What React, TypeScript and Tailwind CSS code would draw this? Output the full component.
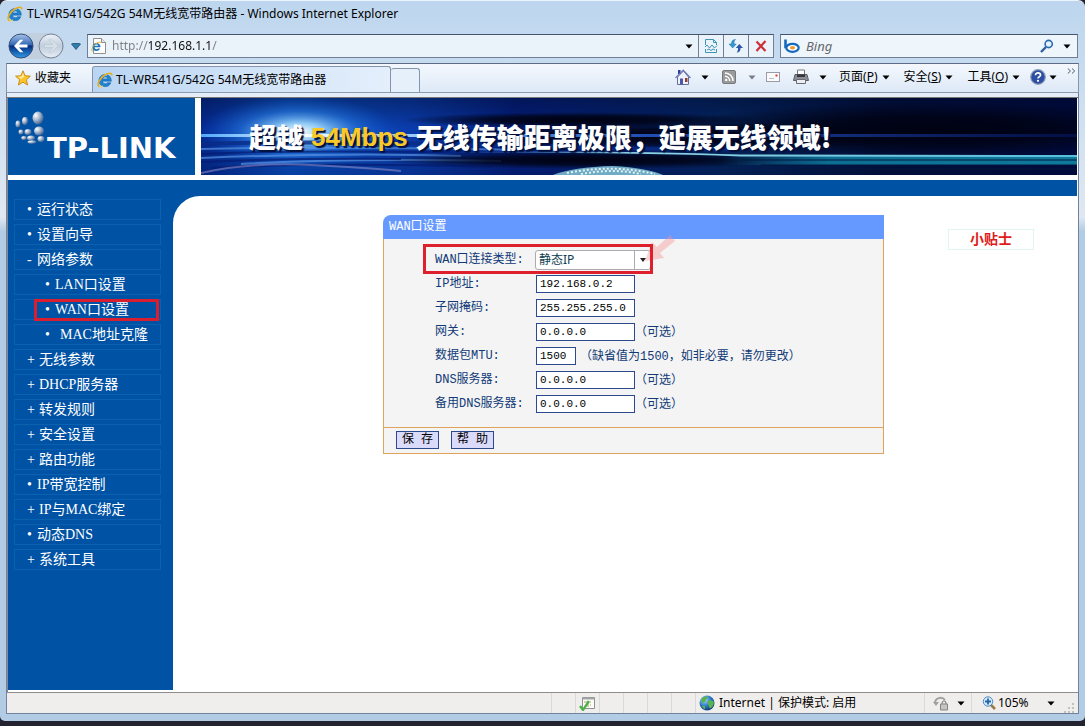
import type { ReactNode } from 'react';

const uiFont = "font-['Noto_Sans','Noto_Sans_CJK_SC',sans-serif]";
const formFont = "font-['Liberation_Mono','Noto_Sans_CJK_SC',monospace]";
const pageFont = "font-['Liberation_Serif','Noto_Sans_CJK_SC',serif]";

const menu = [
  { mark: '•', label: '运行状态' },
  { mark: '•', label: '设置向导' },
  { mark: '-', label: '网络参数' },
  { mark: '•', label: 'LAN口设置', sub: true },
  { mark: '•', label: 'WAN口设置', sub: true, active: true },
  { mark: '•', label: 'MAC地址克隆', sub: true, wide: true },
  { mark: '+', label: '无线参数' },
  { mark: '+', label: 'DHCP服务器' },
  { mark: '+', label: '转发规则' },
  { mark: '+', label: '安全设置' },
  { mark: '+', label: '路由功能' },
  { mark: '•', label: 'IP带宽控制' },
  { mark: '+', label: 'IP与MAC绑定' },
  { mark: '•', label: '动态DNS' },
  { mark: '+', label: '系统工具' },
];

const fields = [
  { id: 'ip', label: 'IP地址:', value: '192.168.0.2' },
  { id: 'mask', label: '子网掩码:', value: '255.255.255.0' },
  { id: 'gateway', label: '网关:', value: '0.0.0.0', note: '（可选）' },
  { id: 'mtu', label: '数据包MTU:', value: '1500', note: '（缺省值为1500，如非必要，请勿更改）', small: true },
  { id: 'dns', label: 'DNS服务器:', value: '0.0.0.0', note: '（可选）' },
  { id: 'dns2', label: '备用DNS服务器:', value: '0.0.0.0', note: '（可选）' },
];

function Caret({ className = 'text-black' }: { className?: string }) {
  return (
    <svg viewBox="0 0 8 5" className={`w-[8px] h-[5px] shrink-0 ${className}`}>
      <path d="M0.5 0.5h7L4 4.5z" fill="currentColor" />
    </svg>
  );
}

function IeLogo({ className }: { className: string }) {
  return (
    <svg viewBox="0 0 16 16" className={`shrink-0 ${className}`}>
      <path d="M13 9.200H5.600c.1 1.700 1.200 2.500 2.700 2.500 1 0 1.700-.4 2.100-1h3.400c-.9 2.500-2.900 3.900-5.600 3.900-3.700 0-6.300-2.400-6.300-6C1.900 5 4.500 2.500 8.200 2.500c3.800 0 6.200 2.500 6.100 6.700zM5.700 6.900h5C10.500 5.500 9.500 4.900 8.200 4.900S6 5.600 5.700 6.900z" fill="#1e83d0" stroke="#0d5aa3" strokeWidth=".5" />
      <path d="M3 8.500C4.500 5.500 7 3.500 10 3.300" stroke="#7cc4f4" strokeWidth="1" fill="none" />
      <path d="M2.600 14.600C-1 13.500 2.500 6 8 2.800c3.500-2 6.800-2.300 6.900.6" stroke="#e8ae1c" strokeWidth="1.700" fill="none" />
      <path d="M2.200 14.800c1.200.5 2.700-.2 3.600-.9" stroke="#f6cf4a" strokeWidth="1.200" fill="none" />
    </svg>
  );
}

function TitleBar() {
  return (
    <header className="h-[28px] flex items-center gap-1 px-[7px] pb-[2px]">
      <IeLogo className="w-4 h-4" />
      <h1 className="text-[12px] leading-4 text-black whitespace-nowrap">
        TL-WR541G/542G 54M无线宽带路由器 - Windows Internet Explorer
      </h1>
    </header>
  );
}

function BarButton({ label, children }: { label: string; children: ReactNode }) {
  return (
    <button aria-label={label} className="w-[25px] h-full shrink-0 border-l border-[#6f7f98] flex items-center justify-center">
      {children}
    </button>
  );
}

function NavBar() {
  return (
    <div className="h-[34px] flex items-center pl-[8px] pr-[7px]">
      <div className="flex items-center gap-1 rounded-full bg-[#c1cfdf]">
        <button aria-label="后退" className="w-[26px] h-[26px] rounded-full">
          <svg viewBox="0 0 26 26" className="w-full h-full">
            <defs>
              <linearGradient id="back" x1="0" y1="0" x2="0" y2="1">
                <stop offset="0" stopColor="#a8c4e8" />
                <stop offset=".45" stopColor="#3367b4" />
                <stop offset=".5" stopColor="#062c80" />
                <stop offset="1" stopColor="#2e9be6" />
              </linearGradient>
            </defs>
            <circle cx="13" cy="13" r="12" fill="url(#back)" stroke="#33507e" />
            <path d="M6 13l6-6.200h3.300L11 11.500h8.500v3H11l4.300 4.700H12z" fill="#fff" />
          </svg>
        </button>
        <button aria-label="前进" className="w-[26px] h-[26px] rounded-full">
          <svg viewBox="0 0 26 26" className="w-full h-full">
            <defs>
              <linearGradient id="forward" x1="0" y1="0" x2="0" y2="1">
                <stop offset="0" stopColor="#eef3f8" />
                <stop offset=".5" stopColor="#c0cddb" />
                <stop offset="1" stopColor="#e6eef6" />
              </linearGradient>
            </defs>
            <circle cx="13" cy="13" r="12" fill="url(#forward)" stroke="#75859b" />
            <path d="M20 13l-6-6.200h-3.300L15 11.500H6.500v3H15l-4.300 4.700H14z" fill="#d7dfe8" stroke="#b9c6d3" strokeWidth=".6" />
          </svg>
        </button>
      </div>
      <button aria-label="最近的页面" className="w-[23px] flex justify-center">
        <svg viewBox="0 0 10 7" className="w-[10px] h-[7px]">
          <path d="M.5 1l1-.5h7l1 .5L5 6.500z" fill="#2d7fa8" stroke="#1c4f7b" strokeWidth=".8" />
        </svg>
      </button>

      <div className="flex-1 h-6 flex items-center border border-[#6f7f98] border-t-[#45536c] bg-[#eaf2fa]">
        <svg viewBox="0 0 16 16" className="w-4 h-4 ml-[3px] shrink-0">
          <path d="M2.500.5h8l4 4v11h-12z" fill="#fff" stroke="#909090" />
          <path d="M10.500.5v4h4" fill="#e8e8e8" stroke="#909090" />
          <path d="M9.500 9.300h-6c.2 1.300 1 1.900 2 1.900.7 0 1.200-.2 1.500-.6h2c-.6 1.700-2 2.500-3.700 2.500C3 13.100 1.500 11.500 1.500 9s1.600-4.100 4-4.100S9.700 6.500 9.500 9.300zM3.500 7.800h3.700C7 6.900 6.400 6.400 5.400 6.400s-1.700.6-1.900 1.400z" fill="#1976bf" />
          <path d="M1.500 13.500C-.5 12 2 7 6 5c2-1 4-1.500 4 0" stroke="#e8ae1c" fill="none" />
        </svg>
        {/* protocol is dimmed, host stays dark */}
        <input
          aria-label="地址"
          defaultValue="http://192.168.1.1/"
          className="flex-1 min-w-0 ml-[5px] text-[12px] leading-5 text-transparent bg-clip-text bg-[linear-gradient(to_right,#7d8086_37px,#111_37px,#111_98px,#7d8086_98px)] outline-none"
        />
        <button aria-label="显示地址" className="w-[18px] h-full flex items-center justify-center"><Caret /></button>
        <BarButton label="兼容性视图">
          <svg viewBox="0 0 14 14" className="w-[14px] h-[14px]" fill="none" stroke="#3f95b3">
            <path d="M1.500 6V.5h8l3 3V6M9.500.5v3h3M1.500 10v3.500h11V10" />
            <path d="M1 8l2-2 2.500 3L8 6l2.500 3L13 6.500M3 11l2-1 2 1.500L9 10l2 1" />
          </svg>
        </BarButton>
        <BarButton label="刷新">
          <svg viewBox="0 0 14 14" className="w-[14px] h-[14px]">
            <path d="M6.500.5C3.500.5 2.300 2.500 2.500 5H0l3.700 4L7.200 5H5C4.900 3 5.300 1.500 6.500.5z" fill="#3399cf" stroke="#2071a8" strokeWidth=".5" />
            <path d="M7.500 13.500c3 0 4.200-2 4-4.500H14l-3.700-4-3.500 4H9c.1 2-.3 3.500-1.500 4.500z" fill="#2759a7" />
          </svg>
        </BarButton>
        <BarButton label="停止">
          <svg viewBox="0 0 12 12" className="w-3 h-3">
            <path d="M1.500 1.500l9 9.500M10.500 1l-9 10" stroke="#cc2f38" strokeWidth="2.200" />
          </svg>
        </BarButton>
      </div>

      <div className="ml-[6px] w-[298px] h-6 flex items-center border border-[#6f7f98] border-t-[#45536c] bg-[#eef5fb]">
        <svg viewBox="0 0 16 14" className="w-4 h-[14px] ml-[3px] shrink-0">
          <path d="M1.500.5v8.800" stroke="#1469bd" strokeWidth="2.600" />
          <ellipse cx="8.500" cy="8.800" rx="6.200" ry="4" fill="#fff" stroke="#1469bd" strokeWidth="2.200" />
          <ellipse cx="8.500" cy="8.800" rx="2.600" ry="1.800" fill="#f19a2a" />
        </svg>
        <input
          aria-label="搜索"
          placeholder="Bing"
          className="flex-1 min-w-0 ml-[6px] text-[13px] leading-5 italic bg-transparent outline-none placeholder:text-[#66686c]"
        />
        <button aria-label="开始搜索" className="w-[14px] mr-[3px]">
          <svg viewBox="0 0 14 14" className="w-[14px] h-[14px]">
            <path d="M1 13l5-5" stroke="#2d5f9f" strokeWidth="2.400" />
            <circle cx="8.700" cy="5" r="3.600" fill="#e3f3ff" stroke="#2d69b0" strokeWidth="1.600" />
          </svg>
        </button>
        <button aria-label="搜索选项" className="w-5 flex justify-center mr-[-0px]"><Caret /></button>
      </div>
    </div>
  );
}

function CommandBar() {
  return (
    <div className="mx-[6px] h-[30px] flex border border-[#8795ab] border-t-[#5d6c86] border-b-[#8b9aaf] bg-linear-to-b from-[#f4f8fd] to-[#dde9f7] text-[12px] leading-4 text-black">
      <button className="w-[85px] flex items-center gap-1 pl-[8px]">
        <svg viewBox="0 0 16 16" className="w-4 h-4">
          <path d="M8 .8l2.100 4.900 5.300.5-4 3.500 1.200 5.300L8 12.200 3.400 15l1.200-5.300-4-3.500 5.300-.5z" fill="#fbc62c" stroke="#c98512" strokeWidth=".9" />
          <path d="M8 3l1.200 3.500L6 9 3 6.800l3.500-.4z" fill="#fdeb9a" />
        </svg>
        收藏夹
      </button>
      <div className="mt-[2px] w-[299px] flex items-center gap-[3px] pl-[4px] rounded-t-[3px] border border-b-0 border-[#8494ab] bg-linear-to-r from-[#b9d5f3] via-[#cfe2f7] to-[#e4effb]">
        <IeLogo className="w-4 h-4" />
        <span className="whitespace-nowrap">TL-WR541G/542G 54M无线宽带路由器</span>
      </div>
      <button aria-label="新选项卡" className="mt-[4px] w-[29px] rounded-t-[3px] border border-l-0 border-b-0 border-[#8494ab] bg-[#e6f0fb]" />

      <div className="flex-1 flex items-center justify-end pb-[2px]">
        <button aria-label="主页" className="flex items-center gap-[10px] mr-[13px]">
          <svg viewBox="0 0 16 16" className="w-4 h-4">
            <path d="M3 1h2.500v4H3z" fill="#2c3c9b" />
            <path d="M2.500 8L8.500 2l5 6v7.500h-11z" fill="#eef1fa" stroke="#626f9d" />
            <path d="M.5 9L8.200 1.200 15.500 9" fill="none" stroke="#6d7ab0" strokeWidth="1.200" />
            <path d="M5 9.500h3v6H5z" fill="#4a5aa5" />
            <path d="M10 9h2.500v4H10z" fill="#913e35" />
          </svg>
          <Caret />
        </button>
        <button aria-label="源" className="flex items-center gap-[12px] mr-[10px]">
          <svg viewBox="0 0 14 14" className="w-[14px] h-[14px]">
            <rect x=".5" y=".5" width="13" height="13" rx="1.500" fill="#999b9d" stroke="#77797b" />
            <path d="M3 3c4.500 0 8 3.500 8 8M3 6.300c2.600 0 4.700 2.100 4.700 4.700" stroke="#fff" strokeWidth="1.500" fill="none" />
            <circle cx="4.200" cy="9.900" r="1.200" fill="#fff" />
          </svg>
          <Caret className="text-[#777d86]" />
        </button>
        <button aria-label="阅读邮件" className="mr-[13px]">
          <svg viewBox="0 0 14 10" className="w-[14px] h-[10px]">
            <rect x=".5" y=".5" width="13" height="9" fill="#fbfbfd" stroke="#9b9ba6" />
            <path d="M9.500 2.500h2v2h-2z" fill="#d63a3a" />
            <path d="M3 6.500h5" stroke="#b8bac8" />
          </svg>
        </button>
        <button aria-label="打印" className="flex items-center gap-[10px] mr-[12px]">
          <svg viewBox="0 0 16 16" className="w-4 h-4">
            <path d="M4.500 1h7v6h-7z" fill="#fff" stroke="#75787d" />
            <path d="M2 5.500h12l1.500 6H.5z" fill="#8b8f95" stroke="#5a5e64" />
            <path d="M4 5.500h8v2.500H4z" fill="#33363b" />
            <path d="M3.500 10.500h9v4h-9z" fill="#eceef1" stroke="#6a6e74" />
          </svg>
          <Caret />
        </button>
        <button className="flex items-center gap-1 mr-[14px]"><span>页面(<u>P</u>)</span><Caret /></button>
        <button className="flex items-center gap-1 mr-[14px]"><span>安全(<u>S</u>)</span><Caret /></button>
        <button className="flex items-center gap-1 mr-[10px]"><span>工具(<u>O</u>)</span><Caret /></button>
        <button aria-label="帮助菜单" className="flex items-center gap-[3px] mr-[10px]">
          <svg viewBox="0 0 16 16" className="w-4 h-4">
            <circle cx="8" cy="8" r="7.300" fill="#2c4fa3" stroke="#8f9db8" strokeWidth="1.200" />
            <path d="M5.500 6.200C5.500 3 10.800 3.200 10.500 6.200 10.300 7.800 8 7.700 8 9.500" stroke="#fff" strokeWidth="1.700" fill="none" />
            <circle cx="8" cy="11.800" r="1.100" fill="#fff" />
          </svg>
          <Caret />
        </button>
        <button aria-label="更多" className="self-start mt-1 mr-[2px]">
          <svg viewBox="0 0 9 6" className="w-[9px] h-[6px]" fill="none" stroke="#4b5c78">
            <path d="M.8.5L3.500 3 .8 5.500M5 .5L7.700 3 5 5.500" />
          </svg>
        </button>
      </div>
    </div>
  );
}

function Logo() {
  const drops = [
    [18, 26, 2.500, 3.500], [25, 23, 3, 4], [38, 20, 5.500, 6.500],
    [21, 34, 2.500, 2.500], [28, 34, 3.500, 3], [39, 33, 5, 4.500],
    [24, 40, 2.800, 2], [31, 40, 4, 2.500], [41, 41, 3.500, 3], [32, 44, 4.500, 1.800],
  ];
  return (
    <div className="relative w-[187px] shrink-0 bg-[#0052a4]">
      <svg viewBox="8 0 48 52" className="absolute left-0 top-0 w-[48px] h-[52px]">
        <defs>
          <radialGradient id="drop" cx=".3" cy=".3" r=".8">
            <stop offset="0" stopColor="#fff" />
            <stop offset=".5" stopColor="#9db0c8" />
            <stop offset="1" stopColor="#2a5590" />
          </radialGradient>
        </defs>
        {drops.map(([x, y, rx, ry]) => (
          <ellipse key={`${x}-${y}`} cx={x} cy={y} rx={rx} ry={ry} fill="url(#drop)" />
        ))}
      </svg>
      <div className="pt-[36px] pl-[39px] whitespace-nowrap text-white">
        <span className="font-['DejaVu_Sans',sans-serif] font-bold text-[29px] leading-7">TP-LINK</span>
      </div>
    </div>
  );
}

function Banner() {
  return (
    <div className="relative flex-1 overflow-hidden bg-[#01082c]">
      <svg viewBox="0 0 876 77" preserveAspectRatio="none" className="absolute inset-0 w-full h-full">
        <defs>
          <linearGradient id="sky" x1="0" y1="0" x2="1" y2="0">
            <stop offset="0" stopColor="#052a92" />
            <stop offset=".1" stopColor="#0a4fc2" />
            <stop offset=".24" stopColor="#0a3cac" />
            <stop offset=".36" stopColor="#041f80" />
            <stop offset=".6" stopColor="#042560" />
            <stop offset=".78" stopColor="#021040" />
            <stop offset="1" stopColor="#000b42" />
          </linearGradient>
          <linearGradient id="top" x1="0" y1="0" x2="0" y2="1">
            <stop offset="0" stopColor="#00071f" stopOpacity=".4" />
            <stop offset=".4" stopColor="#00071f" stopOpacity="0" />
            <stop offset="1" stopColor="#00071f" stopOpacity=".2" />
          </linearGradient>
          <radialGradient id="flare">
            <stop offset="0" stopColor="#ffffff" />
            <stop offset=".25" stopColor="#a5defd" stopOpacity=".85" />
            <stop offset=".6" stopColor="#2f86ea" stopOpacity=".45" />
            <stop offset="1" stopColor="#1259d3" stopOpacity="0" />
          </radialGradient>
          <linearGradient id="beam" x1="0" y1="0" x2="1" y2="0">
            <stop offset="0" stopColor="#4fa8f8" />
            <stop offset=".12" stopColor="#f4fdff" />
            <stop offset=".3" stopColor="#6db4fa" />
            <stop offset=".5" stopColor="#2b62dd" stopOpacity=".8" />
            <stop offset="1" stopColor="#061b70" stopOpacity=".5" />
          </linearGradient>
          <linearGradient id="trail" gradientUnits="userSpaceOnUse" x1="240" y1="0" x2="876" y2="0">
            <stop offset="0" stopColor="#2a86d0" stopOpacity="0" />
            <stop offset=".3" stopColor="#8fd3e4" />
            <stop offset="1" stopColor="#58bfdc" />
          </linearGradient>
          <linearGradient id="teal" gradientUnits="userSpaceOnUse" x1="520" y1="0" x2="876" y2="0">
            <stop offset="0" stopColor="#0d6d93" stopOpacity="0" />
            <stop offset=".3" stopColor="#0d6d93" />
            <stop offset="1" stopColor="#0f7a9c" />
          </linearGradient>
          <radialGradient id="dark">
            <stop offset="0" stopColor="#000212" />
            <stop offset=".5" stopColor="#000212" stopOpacity=".8" />
            <stop offset="1" stopColor="#000212" stopOpacity="0" />
          </radialGradient>
        </defs>
        <rect width="876" height="77" fill="url(#sky)" />
        <rect width="876" height="77" fill="url(#top)" />
        <ellipse cx="380" cy="22" rx="180" ry="8" fill="url(#dark)" />
        <ellipse cx="480" cy="38" rx="260" ry="14" fill="url(#dark)" />
        <ellipse cx="730" cy="32" rx="260" ry="28" fill="url(#dark)" />
        <ellipse cx="98" cy="34" rx="100" ry="36" fill="url(#flare)" />
        <path d="M0 46Q120 42 340 48T520 50" stroke="#0a2b86" strokeWidth="4" fill="none" opacity=".8" />
        <path d="M0 51Q120 48 320 52M0 60Q150 54 260 58M40 66Q150 60 300 63" stroke="#5f9ae6" strokeWidth="2" fill="none" opacity=".65" />
        <path d="M0 56Q120 51 320 56M10 70Q120 64 290 69M0 64Q80 60 200 61" stroke="#051b70" strokeWidth="2" fill="none" opacity=".7" />
        <path d="M0 75q50-11 110-8T200 73" stroke="#b3a6dd" strokeWidth="2" fill="none" opacity=".45" />
        <rect y="36" width="876" height="3" fill="url(#beam)" />
        <ellipse cx="390" cy="62" rx="210" ry="9" fill="url(#dark)" />
        <path d="M352 77Q372 69 412 68 446 70 462 77z" fill="#6fabc4" />
        <path d="M366 75Q412 66 454 76M380 76Q412 70 440 76" stroke="#e0f3f5" strokeWidth="2" strokeDasharray="2 2" fill="none" />
        <rect x="520" y="58" width="356" height="9" fill="url(#teal)" />
        <path d="M540 62h336M560 67h316M600 71h276" stroke="#02193c" fill="none" />
        <path d="M240 54Q420 52 540 56.500L876 57v2L540 58.500Q420 54 240 55z" fill="url(#trail)" />
      </svg>
      <p className="relative flex items-center h-full pl-[48px] whitespace-nowrap font-['Noto_Sans_CJK_SC',sans-serif] font-black text-[27px] leading-8 text-white [text-shadow:2px_2px_1px_#02103d]">
        <span>超越</span>
        <span className="mx-2 font-['Liberation_Sans',sans-serif] text-[26px] text-[#fac927]">54Mbps</span>
        <span>无线传输距离极限，延展无线领域!</span>
      </p>
    </div>
  );
}

function Sidebar() {
  return (
    <nav className={`w-[165px] shrink-0 pt-[3px] pl-[6px] pr-[12px] bg-[#0052a4] text-[14px] leading-5 text-white ${pageFont}`}>
      <ul className="flex flex-col gap-[4px]">
        {menu.map((item) => (
          <li key={item.label} className="relative h-[21px] border border-[#0a61b0]">
            <a href="#" className={`flex h-full items-center whitespace-nowrap ${item.sub ? 'pl-[30px]' : 'pl-[12px]'}`}>
              <span className={item.mark === '+' ? 'w-[12px]' : item.wide ? 'w-[15px]' : 'w-[10px]'}>{item.mark}</span>
              {item.label}
            </a>
            {item.active && (
              <span className="absolute left-[19px] right-[1px] -top-px -bottom-[2px] border-[3px] border-[#d91f2f]" />
            )}
          </li>
        ))}
      </ul>
    </nav>
  );
}

function WanPanel() {
  return (
    <form className={`w-[501px] shrink-0 text-[12px] leading-4 text-[#113a77] ${formFont}`} onSubmit={(e) => e.preventDefault()}>
      <h2 className="h-[24px] flex items-center pl-[6px] rounded-tl-[8px] bg-[#6699ff] text-white">WAN口设置</h2>
      <div className="border border-t-0 border-[#dfa35c] bg-[#f4f4f4]">
        <div className="pt-[9px] pb-[11px] pl-[51px]">
          <div className="relative h-6 flex items-center">
            <label htmlFor="wan-type" className="w-[100px] shrink-0">WAN口连接类型:</label>
            <div className="relative">
              <select id="wan-type" className={`block appearance-none w-[116px] h-5 pl-[3px] rounded-[3px] border border-[#a9abb0] bg-white text-[12px] text-[#0d3d4f] ${uiFont}`}>
                <option>静态IP</option>
              </select>
              <span className="pointer-events-none absolute right-0 top-0 w-[17px] h-full border-l border-[#a9abb0] flex items-center justify-center">
                <svg viewBox="0 0 6 4" className="w-[6px] h-[4px]"><path d="M0 0h6L3 4z" fill="#222" /></svg>
              </span>
            </div>
            <svg viewBox="0 0 32 28" className="pointer-events-none absolute left-[208px] -top-[14px] w-[32px] h-[28px]">
              <path d="M2 27L9 8l5 5L27 1l5 6-15 12 4 5z" fill="#fa8f8f" opacity=".4" />
            </svg>
            <span className="pointer-events-none absolute -left-[12px] -top-[4px] w-[230px] h-[30px] border-[3px] border-[#dd202c]" />
          </div>
          {fields.map((f) => (
            <div key={f.id} className="h-6 flex items-center">
              <label htmlFor={f.id} className="w-[101px] shrink-0">{f.label}</label>
              <input
                id={f.id}
                defaultValue={f.value}
                className={`h-[18px] shrink-0 pl-[3px] border border-[#2b4a8c] bg-white text-[11px] text-black ${f.small ? 'w-[40px] mr-1' : 'w-[99px]'}`}
              />
              {f.note && <span className="pt-[2px] whitespace-nowrap">{f.note}</span>}
            </div>
          ))}
        </div>
        <div className="h-[26px] flex items-center gap-[12px] pl-[12px] pb-px border-t border-[#dfa35c]">
          <button className="w-[43px] h-[18px] border border-[#2b4a8c] bg-[#dadafa] text-black leading-4">保 存</button>
          <button type="button" className="w-[43px] h-[18px] border border-[#2b4a8c] bg-[#dadafa] text-black leading-4">帮 助</button>
        </div>
      </div>
    </form>
  );
}

function StatusBar() {
  return (
    <footer className="h-[21px] shrink-0 flex items-center justify-end border-t border-[#8d8d8d] bg-[#f0eeed] text-[12px] leading-4 text-black">
      <span className="w-[24px] h-full border-l border-[#dcdad8]" />
      <span className="w-[24px] h-full border-l border-[#dcdad8] flex items-center justify-center">
        <svg viewBox="0 0 17 15" className="w-[17px] h-[15px]">
          <path d="M3.500 1.500h12v11h-12z" fill="#fdfdf5" stroke="#8d9394" />
          <path d="M3.500 2.500h12" stroke="#9fa6a8" strokeWidth="2" />
          <path d="M9 5v6M5 6h3M11 6h1M11 9h1" stroke="#b0a070" />
          <path d="M1 10l3 4L10 5" stroke="#4fb24d" strokeWidth="2.400" fill="none" />
        </svg>
      </span>
      <span className="w-[24px] h-full border-l border-[#dcdad8]" />
      <span className="w-[24px] h-full border-l border-[#dcdad8]" />
      <span className="w-[24px] h-full border-l border-[#dcdad8]" />
      <span className="w-[24px] h-full border-l border-[#dcdad8]" />
      <div className="w-[229px] h-full border-l border-[#dcdad8] flex items-center gap-1 pl-[3px]">
        <svg viewBox="0 0 16 16" className="w-4 h-4">
          <defs>
            <radialGradient id="globe" cx=".35" cy=".3" r=".8">
              <stop offset="0" stopColor="#a9dcf8" />
              <stop offset=".5" stopColor="#2e79c8" />
              <stop offset="1" stopColor="#0d2d6c" />
            </radialGradient>
          </defs>
          <circle cx="8" cy="8" r="7.500" fill="url(#globe)" />
          <path d="M2.500 4C5 1 8 1 9 2.500 8 4 6.500 4 6.500 6.500L3 8.500zM9 6.500c2-2 5-1.500 6 1-.5 3-2 5.500-4 6C10 11.500 8.500 9 9 6.500zM3 10.500l3 .5v3.500c-1.500-.7-2.500-2-3-4z" fill="#58b44b" />
        </svg>
        Internet | 保护模式: 启用
      </div>
      <button aria-label="安全报告" className="w-[47px] h-full border-l border-[#dcdad8] flex items-center gap-[7px] pl-[8px]">
        <svg viewBox="0 0 17 15" className="w-[17px] h-[15px] shrink-0">
          <path d="M2 7C2 2 9 0 12 4" stroke="#a0a0a0" strokeWidth="2" fill="none" />
          <path d="M0 6h6l-3 4z" fill="#a0a0a0" />
          <path d="M7.500 8h7v6h-7z" fill="#c5c5c5" stroke="#858585" />
          <path d="M9 8c0-4 4-4 4 0" stroke="#858585" strokeWidth="1.200" fill="none" />
        </svg>
        <Caret />
      </button>
      <button className="w-[88px] h-full border-l border-[#dcdad8] flex items-center gap-[2px] pl-[10px] pr-[4px]">
        <svg viewBox="0 0 14 14" className="w-[14px] h-[14px] shrink-0">
          <path d="M9 9l4 4" stroke="#9a7a45" strokeWidth="2.500" />
          <circle cx="6" cy="5.500" r="4.700" fill="#d8edfb" stroke="#4b86bd" />
          <path d="M3 5.500h6M6 2.500v6" stroke="#2266ad" strokeWidth="1.800" />
        </svg>
        <span className="flex-1 text-left">105%</span>
        <Caret />
      </button>
      <svg viewBox="0 0 12 12" className="w-3 h-3 ml-1 mr-[3px] self-end">
        <path d="M9 2h2v2H9zM9 6h2v2H9zM5 6h2v2H5zM9 10h2v2H9zM5 10h2v2H5zM1 10h2v2H1z" fill="#c4c0bc" />
      </svg>
    </footer>
  );
}

export default function App() {
  return (
    <div className={`min-h-screen flex flex-col bg-[#23232f] pb-[5px] ${uiFont}`}>
      <div className="flex-1 flex flex-col rounded-t-[7px] rounded-b-[5px] border-t border-[#e9f4fc] bg-linear-to-b from-[#bdd6ee] from-0% via-[#dfe8f2] via-30% to-[#b2cce5] to-32%">
        <TitleBar />
        <NavBar />
        <CommandBar />
        <div className="mx-[6px] mb-[7px] flex-1 flex flex-col border border-t-0 border-[#71839c] bg-white">
          <div className="h-[5px] bg-[#e5eef8] border-b border-[#777777]" />
          <div className="flex-1 flex flex-col border-l border-[#8a8a8a] pr-px pb-[2px]">
            <div className="h-[77px] flex gap-[6px]">
              <Logo />
              <Banner />
            </div>
            <div className="h-[5px]" />
            <div className="h-4 bg-[#0052a4]" />
            <div className="flex-1 flex">
              <Sidebar />
              <div className="flex-1 bg-[#0052a4]">
                <main className="h-full flex items-start rounded-tl-[27px] bg-white pt-[19px] pl-[210px]">
                  <WanPanel />
                  <aside className={`mt-[14px] ml-16 w-[86px] h-[21px] shrink-0 border border-[#e0f4f2] text-center text-[14px] leading-5 font-bold text-[#e01b1b] ${pageFont}`}>
                    小贴士
                  </aside>
                </main>
              </div>
            </div>
          </div>
          <StatusBar />
        </div>
      </div>
    </div>
  );
}
